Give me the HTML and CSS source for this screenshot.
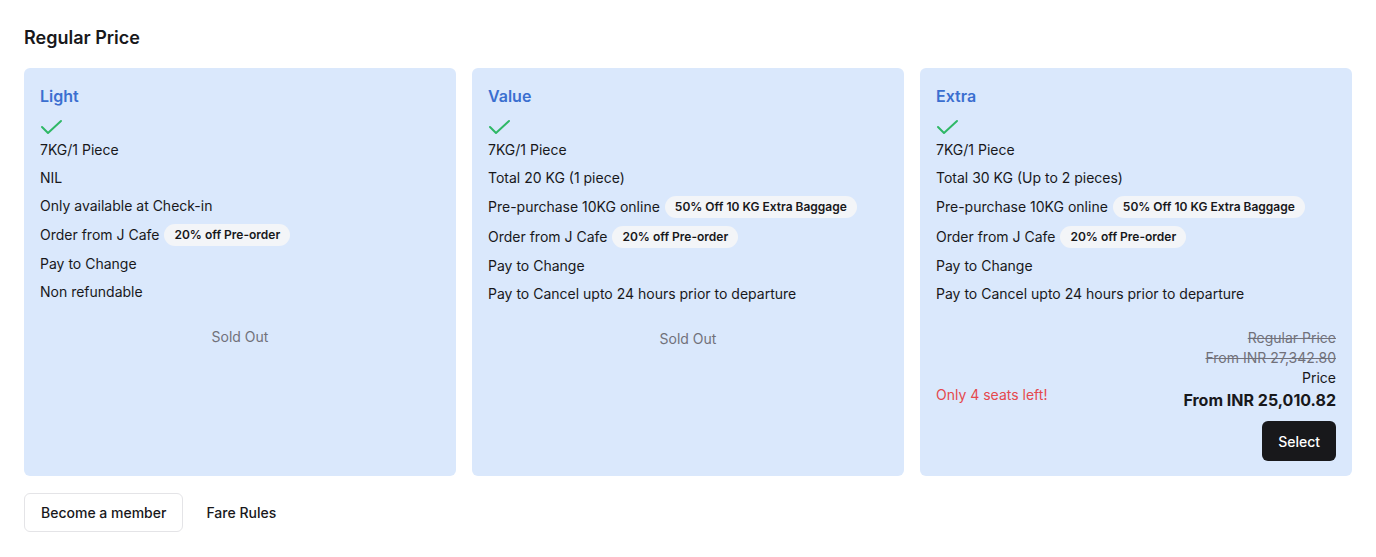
FILE: index.html
```html
<!DOCTYPE html>
<html lang="en">
<head>
<meta charset="utf-8">
<title>Regular Price</title>
<link rel="stylesheet" href="styles.css">
</head>
<body>
<main class="page">
  <h2 class="heading">Regular Price</h2>
  <div class="cards">
    <section class="card">
      <h3 class="card-title">Light</h3>
      <div class="check"><svg width="24" height="24" viewBox="0 0 24 24"><path d="M2 11 L8 17 L21 5" fill="none" stroke="#2fb866" stroke-width="2" stroke-linecap="round" stroke-linejoin="round"/></svg></div>
      <ul class="features">
        <li>7KG/1 Piece</li>
        <li>NIL</li>
        <li>Only available at Check-in</li>
        <li class="with-badge">Order from J Cafe<span class="badge">20% off Pre-order</span></li>
        <li>Pay to Change</li>
        <li>Non refundable</li>
      </ul>
      <div class="sold-out">Sold Out</div>
    </section>
    <section class="card">
      <h3 class="card-title">Value</h3>
      <div class="check"><svg width="24" height="24" viewBox="0 0 24 24"><path d="M2 11 L8 17 L21 5" fill="none" stroke="#2fb866" stroke-width="2" stroke-linecap="round" stroke-linejoin="round"/></svg></div>
      <ul class="features">
        <li>7KG/1 Piece</li>
        <li>Total 20 KG (1 piece)</li>
        <li class="with-badge">Pre-purchase 10KG online<span class="badge">50% Off 10 KG Extra Baggage</span></li>
        <li class="with-badge">Order from J Cafe<span class="badge">20% off Pre-order</span></li>
        <li>Pay to Change</li>
        <li>Pay to Cancel upto 24 hours prior to departure</li>
      </ul>
      <div class="sold-out">Sold Out</div>
    </section>
    <section class="card">
      <h3 class="card-title">Extra</h3>
      <div class="check"><svg width="24" height="24" viewBox="0 0 24 24"><path d="M2 11 L8 17 L21 5" fill="none" stroke="#2fb866" stroke-width="2" stroke-linecap="round" stroke-linejoin="round"/></svg></div>
      <ul class="features">
        <li>7KG/1 Piece</li>
        <li>Total 30 KG (Up to 2 pieces)</li>
        <li class="with-badge">Pre-purchase 10KG online<span class="badge">50% Off 10 KG Extra Baggage</span></li>
        <li class="with-badge">Order from J Cafe<span class="badge">20% off Pre-order</span></li>
        <li>Pay to Change</li>
        <li>Pay to Cancel upto 24 hours prior to departure</li>
      </ul>
      <div class="buy">
        <div class="seats">Only 4 seats left!</div>
        <div class="price-col">
          <div class="old">Regular Price</div>
          <div class="old">From INR 27,342.80</div>
          <div class="price-label">Price</div>
          <div class="price">From INR 25,010.82</div>
          <button class="select">Select</button>
        </div>
      </div>
    </section>
  </div>
  <div class="actions">
    <button class="btn-outline">Become a member</button>
    <button class="btn-ghost">Fare Rules</button>
  </div>
</main>
</body>
</html>
```
FILE: styles.css
```css
* { box-sizing: border-box; }
html, body { margin: 0; padding: 0; background: #ffffff; }
body {
  font-family: Inter, "Liberation Sans", sans-serif;
  color: #18181b;
  font-size: 14px;
  line-height: 20px;
}
.page { padding: 24px; }
.heading {
  margin: 0 0 16px;
  font-size: 18px;
  line-height: 28px;
  font-weight: 600;
}
.cards {
  display: grid;
  grid-template-columns: repeat(3, 1fr);
  gap: 16px;
}
.card {
  background: #dae8fc;
  border-radius: 6px;
  padding: 16px 16px 15px;
  display: flex;
  flex-direction: column;
}
.card-title {
  margin: 0 0 8px;
  font-size: 16px;
  line-height: 24px;
  font-weight: 600;
  color: #3b6fd0;
}
.check { height: 24px; display: flex; }
.check svg { display: block; }
.features {
  list-style: none;
  margin: 0;
  padding: 0;
  display: flex;
  flex-direction: column;
  gap: 8px;
}
.features li { display: flex; align-items: center; min-height: 20px; }
.features li.with-badge { min-height: 22px; }
.badge {
  display: inline-flex;
  align-items: center;
  height: 22px;
  margin-left: 5px;
  padding: 0 10px;
  border-radius: 11px;
  background: #f3f5f8;
  font-size: 12px;
  font-weight: 600;
  line-height: 16px;
}
.sold-out {
  margin-top: 25px;
  text-align: center;
  color: #71717a;
}
.buy {
  margin-top: 24px;
  display: flex;
  align-items: center;
  justify-content: space-between;
}
.seats { color: #e5484d; }
.price-col {
  display: flex;
  flex-direction: column;
  align-items: flex-end;
  text-align: right;
}
.old { color: #71717a; text-decoration: line-through; }
.price {
  font-size: 16px;
  line-height: 24px;
  font-weight: 700;
}
.select {
  margin-top: 9px;
  height: 40px;
  padding: 0 16px;
  border: none;
  border-radius: 6px;
  background: #18181b;
  color: #fff;
  font-family: inherit;
  font-size: 14px;
  font-weight: 500;
}
.actions {
  margin-top: 17px;
  display: flex;
  gap: 6px;
}
.btn-outline, .btn-ghost {
  height: 39px;
  padding: 0 16px;
  border-radius: 6px;
  font-family: inherit;
  font-size: 14px;
  font-weight: 500;
  color: #18181b;
  background: #fff;
}
.btn-outline { border: 1px solid #e4e4e7; }
.btn-ghost { border: 1px solid transparent; }
```
